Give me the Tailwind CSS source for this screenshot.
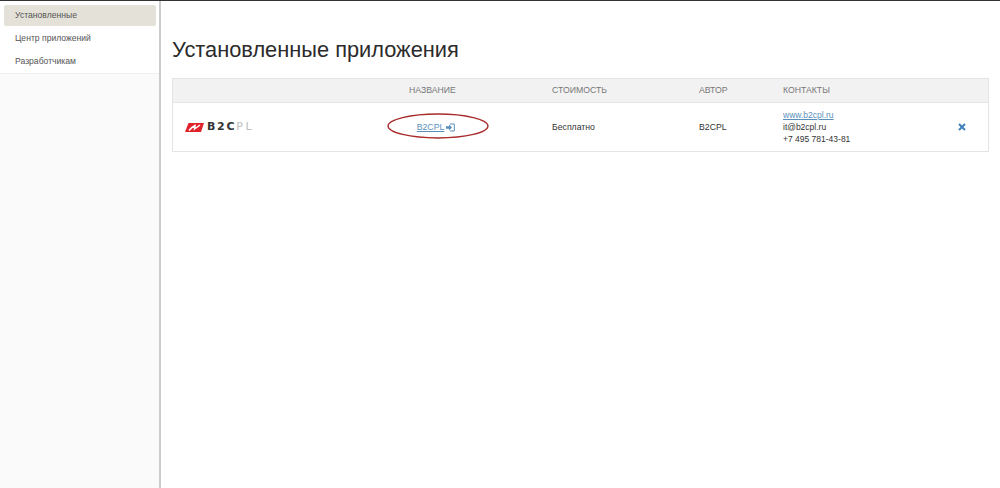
<html lang="ru">
<head>
    <meta charset="UTF-8">
    <title>Установленные приложения</title>
    <script src="https://cdn.jsdelivr.net/npm/@tailwindcss/browser@4"></script>
</head>
<body class="bg-white font-['Liberation_Sans',Arial,sans-serif] text-[#333] h-[488px] overflow-hidden">
    <div class="h-px bg-[#333]"></div>
    <div class="flex h-[487px]">
        <aside class="w-[161px] shrink-0 bg-[#fafafa] border-r-2 border-[#ccc]">
            <nav class="bg-white border-b border-[#f0f0f0] h-[73px] pt-[4px] pl-[4px] pr-[3px] text-[8.6px] text-[#555]">
                <a class="flex items-center h-[21px] pl-[11px] bg-[#e4e1d8] rounded-[2px]">Установленные</a>
                <a class="flex items-center h-[23px] mt-[1px] pl-[11px]">Центр приложений</a>
                <a class="flex items-center h-[23px] pl-[11px]">Разработчикам</a>
            </nav>
        </aside>
        <main class="flex-1 pl-[11px] pr-[11px]">
            <h1 class="text-[21.8px] leading-[28px] text-[#2b2b2b] mt-[35px] mb-[14px]">Установленные приложения</h1>
            <div class="border border-[#e4e4e4] w-[817px]">
                <div class="flex items-center h-[24px] bg-[#f2f2f2] border-b border-[#e4e4e4] text-[8.7px] text-[#777]">
                    <div class="w-[196px]"></div>
                    <div class="w-[127px] text-center">НАЗВАНИЕ</div>
                    <div class="w-[203px] pl-[56px]">СТОИМОСТЬ</div>
                    <div class="w-[84px]">АВТОР</div>
                    <div>КОНТАКТЫ</div>
                </div>
                <div class="flex items-center h-[48px] text-[8.7px] text-[#333]">
                    <div class="w-[196px] pl-[12px] flex items-center gap-[3px]">
                        <svg width="19" height="9" viewBox="0 0 19 9"><path d="M3.500 0H19L16 9H0Z" fill="#e0222b"/><path d="M4 7.500C6 5 8 3.500 10 2.500L9.500 6C11 5 13 3.500 15 2" fill="none" stroke="#fff" stroke-width="1.500"/></svg>
                        <span class="font-['DejaVu_Sans',sans-serif] text-[11px] tracking-[1.700px] text-[#333] font-bold">B2C<span class="text-[#bdbdbd] font-normal tracking-[2.600px]">PL</span></span>
                    </div>
                    <div class="w-[127px] relative">
                        <div class="flex justify-center items-center gap-[2px] pl-[7px] pt-[1px]">
                            <a class="text-[#5a8fbb] underline">B2CPL</a>
                            <svg width="9" height="9" viewBox="0 0 9 9"><path d="M0 3.200H3V1.500L6 4.500L3 7.500V5.800H0Z" fill="#5a8fbb"/><path d="M4 1H8.300V8H4" fill="none" stroke="#5a8fbb" stroke-width="1"/></svg>
                        </div>
                        <svg class="absolute left-[18px] top-[-7px]" width="102" height="26" viewBox="0 0 102 26"><ellipse cx="51" cy="13" rx="50" ry="12" fill="none" stroke="#a82a2a" stroke-width="1.300"/></svg>
                    </div>
                    <div class="w-[203px] pl-[56px] pt-[1px]">Бесплатно</div>
                    <div class="w-[84px] pt-[1px]">B2CPL</div>
                    <div class="w-[175px] leading-[12px] text-[8.5px]">
                        <a class="block text-[#5a8fbb] underline">www.b2cpl.ru</a>
                        <div>it@b2cpl.ru</div>
                        <div>+7 495 781-43-81</div>
                    </div>
                    <svg width="8" height="8" viewBox="0 0 8 8"><path d="M1 1L7 7M7 1L1 7" stroke="#3f80b8" stroke-width="2"/></svg>
                </div>
            </div>
        </main>
    </div>
</body>
</html>
